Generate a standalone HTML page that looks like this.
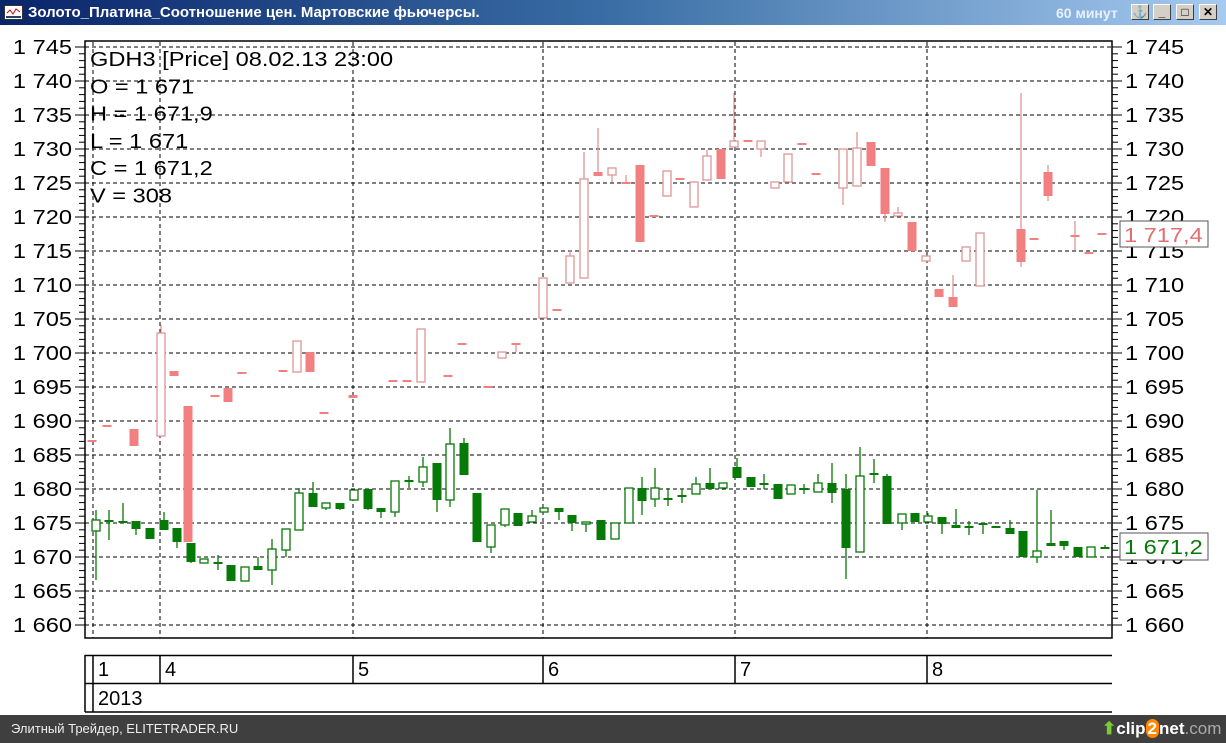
<!DOCTYPE html>
<html><head><meta charset="utf-8"><style>
body{margin:0;width:1226px;height:743px;overflow:hidden;background:#fff;font-family:"Liberation Sans",sans-serif}
#title{position:absolute;left:0;top:0;width:1226px;height:25px;background:linear-gradient(90deg,#0a246a,#3a6ea5 50%,#a6caf0)}
#title .t{position:absolute;left:28px;top:4px;color:#fff;font:bold 15px "Liberation Sans","DejaVu Sans",sans-serif}
#title .m{position:absolute;left:1056px;top:5px;color:#e8f0ff;font:bold 14px "Liberation Sans","DejaVu Sans",sans-serif}
.b{position:absolute;top:4px;width:18px;height:16px;background:#d4d0c8;border:1px solid;border-color:#fff #404040 #404040 #fff;box-sizing:border-box;font:bold 12px "Liberation Sans",sans-serif;text-align:center;line-height:14px}
#foot{position:absolute;left:0;top:715px;width:1226px;height:28px;background:#3f3f3f;color:#eee;font-size:13px}
</style></head><body>
<div id="title"><svg width="20" height="16" style="position:absolute;left:4px;top:5px"><rect x="0.5" y="0.5" width="18" height="14" fill="#fff" stroke="#333"/><polyline points="3,8 6,5 9,9 12,4 16,7" fill="none" stroke="#c00"/><rect x="2" y="11" width="15" height="2" fill="#246"/></svg><span class="t">Золото_Платина_Соотношение цен. Мартовские фьючерсы.</span><span class="m">60 минут</span>
<div class="b" style="left:1131px">⚓</div><div class="b" style="left:1153px">_</div><div class="b" style="left:1176px">□</div><div class="b" style="left:1199px">✕</div></div>
<svg id="c" width="1226" height="715" style="position:absolute;left:0;top:0" font-family="Liberation Sans, sans-serif"></svg>
<div id="foot"><span style="position:absolute;left:11px;top:6px">Элитный Трейдер, ELITETRADER.RU</span>
<span style="position:absolute;left:1102px;top:4px;font:bold 17px 'Liberation Sans',sans-serif;color:#fff"><span style="color:#7c3">⬆</span>clip<span style="background:#f80;border-radius:9px;padding:0 2px">2</span>net<span style="color:#aaa;font-weight:normal">.com</span></span></div>
<script>
var s='';function Y(p){return 47+(1745-p)*6.8}
s+='<rect x="85" y="41" width="1027" height="597" fill="none" stroke="#000" stroke-width="1.5"/>';
for(var p=1660;p<=1745;p+=5){var y=Y(p);s+='<line x1="85" x2="1112" y1="'+y+'" y2="'+y+'" stroke="#000" stroke-dasharray="4,3"/>';
s+='<text class="w" x="72" y="'+(y+7)+'" font-size="20" text-anchor="end">1 '+(p-1000)+'</text><text class="w" x="1125" y="'+(y+7)+'" font-size="20">1 '+(p-1000)+'</text>';
s+='<line x1="75" x2="85" y1="'+y+'" y2="'+y+'" stroke="#000"/><line x1="1112" x2="1122" y1="'+y+'" y2="'+y+'" stroke="#000"/>';}
for(var p=1660;p<=1745;p++){if(p%5){var y=Y(p);s+='<line x1="79" x2="85" y1="'+y+'" y2="'+y+'" stroke="#000"/><line x1="1112" x2="1118" y1="'+y+'" y2="'+y+'" stroke="#000"/>';}}
[93,160,353,543,735,927].forEach(function(x){s+='<line x1="'+x+'" x2="'+x+'" y1="42" y2="638" stroke="#000" stroke-dasharray="4,3"/>'});
var G=[[96,520,531,510,580,0],[109,520,522,510,540,1],[123,521,523,503,523,1],[136,521,529,521,535,1],[150,528,539,528,539,1],[164,520,530,512,530,1],[177,528,542,528,548,1],[191,543,562,543,563,1],[204,559,563,559,563,0],[218,562,564,555,570,1],[231,565,581,565,581,1],[245,567,581,567,581,0],[258,566,570,557,570,1],[272,549,570,539,585,0],[286,529,550,529,557,0],[299,493,530,488,530,0],[313,493,507,482,507,1],[326,503,508,503,510,0],[340,503,509,503,510,1],[354,490,500,490,500,0],[368,489,509,489,510,1],[381,508,512,508,518,1],[395,481,512,481,517,0],[409,480,482,476,488,1],[423,467,482,457,487,0],[437,463,500,463,512,1],[450,444,500,428,507,0],[464,443,475,438,475,1],[477,493,542,493,542,1],[491,525,547,525,553,0],[505,509,525,509,527,0],[518,513,526,513,526,1],[532,516,522,510,522,0],
[544,508,512,508,512,0],[559,508,512,508,520,1],[572,515,523,515,531,1],[586,522,524,522,532,0],[601,520,540,520,540,1],[615,523,539,523,539,0],[629,488,523,488,523,0],[642,488,501,477,515,1],[655,488,499,468,507,0],[668,498,500,488,506,1],[682,495,497,489,503,1],[696,484,494,477,494,0],[710,483,489,468,489,1],[723,483,488,483,490,0],[737,467,478,458,478,1],[751,477,487,477,487,1],[764,483,485,474,489,1],[778,484,499,484,499,1],[791,485,494,485,494,0],[804,488,490,484,494,1],[818,483,492,474,492,0],[832,483,493,463,503,1],[846,489,548,474,579,1],[860,476,552,447,552,0],[874,473,475,459,483,1],[887,476,524,474,524,1],[902,514,523,514,530,0],[915,513,522,513,522,1],[928,516,522,513,522,0],[942,517,524,517,534,1],[956,525,528,509,528,1],[969,526,528,521,535,1],[983,523,525,523,534,1],[996,526,528,526,528,1],[1010,528,534,520,534,1],[1023,531,557,531,557,1],[1037,551,557,490,563,0],[1051,543,546,510,546,1],[1064,541,546,541,550,1],[1078,547,557,547,557,1],[1091,547,557,547,557,0],[1105,547,549,545,549,1]];
var P=[[92,440,442,440,442,1],[107,425,427,425,427,1],[134,429,446,429,446,1],[161,333,436,325,436,0],[174,371,376,371,376,1],[188,406,542,406,542,1],[215,395,397,395,397,1],[228,388,402,388,402,1],[242,372,374,372,374,1],[283,370,372,370,372,1],[297,341,372,341,372,0],[310,352,372,352,372,1],[324,412,414,412,414,1],[353,395,398,395,398,1],[393,380,382,380,382,1],[407,380,382,380,382,1],[421,329,382,329,382,0],[448,375,377,375,377,1],[462,343,345,343,345,1],[488,386,388,386,388,1],[502,352,358,352,358,0],[516,343,345,343,352,1],
[543,278,318,278,318,0],[557,309,311,309,311,1],[570,256,283,250,283,0],[584,179,278,152,278,0],[598,172,176,128,176,1],[612,168,175,168,182,0],[626,182,184,175,184,1],[640,165,242,165,242,1],[654,215,217,215,217,1],[667,171,196,171,196,0],[680,178,180,178,180,1],[694,182,207,182,207,0],[707,156,180,150,180,0],[721,149,179,149,179,1],[734,141,147,93,147,0],[748,140,142,140,142,1],[761,141,149,141,157,0],[775,182,188,182,188,0],[788,154,182,154,182,0],[802,143,145,143,145,1],[816,173,175,173,175,1],[843,149,188,149,205,0],[857,148,186,132,186,0],[871,142,166,142,166,1],[885,168,214,168,222,1],[898,213,216,207,216,0],[912,222,251,222,251,1],[926,256,261,256,261,0],[939,289,297,289,297,1],[953,297,307,275,307,1],[966,247,261,247,261,0],[980,233,286,233,286,0],[1021,229,262,93,267,1],[1034,238,240,238,240,1],[1048,172,196,165,201,1],[1075,235,237,221,250,1],[1089,252,254,252,254,1],[1102,233,235,233,235,1]];
function dr(a,f,st){a.forEach(function(c){var x=c[0],w=9;s+='<line x1="'+x+'" x2="'+x+'" y1="'+c[3]+'" y2="'+c[4]+'" stroke="'+st+'" stroke-width="1.3"/>';
var h=Math.max(c[2]-c[1],1.5);if(c[5])s+='<rect x="'+(x-w/2)+'" y="'+c[1]+'" width="'+w+'" height="'+h+'" fill="'+f+'"/>';else s+='<rect x="'+(x-w/2+0.5)+'" y="'+c[1]+'" width="'+(w-1)+'" height="'+h+'" fill="#fff" stroke="'+st+'" stroke-width="1.3"/>';});}
dr(P,'#f38080','#e09595');dr(G,'#067a06','#067a06');
['GDH3 [Price] 08.02.13 23:00','O = 1 671','H = 1 671,9','L = 1 671','C = 1 671,2','V = 308'].forEach(function(t,i){s+='<text class="w" x="90" y="'+(66+i*27.3)+'" font-size="20">'+t+'</text>'});
s+='<rect x="1120" y="221" width="88" height="26" fill="#fff" stroke="#555"/><text class="w" x="1124" y="242" font-size="20" fill="#e07070">1 717,4</text>';
s+='<rect x="1120" y="533" width="88" height="27" fill="#fff" stroke="#555"/><text class="w" x="1124" y="554" font-size="20" fill="#067a06">1 671,2</text>';
s+='<line x1="85" x2="1112" y1="655.5" y2="655.5" stroke="#000" stroke-width="1.5"/><line x1="85" x2="1112" y1="683.5" y2="683.5" stroke="#000" stroke-width="1.5"/><line x1="85" x2="1112" y1="712" y2="712" stroke="#000" stroke-width="1.5"/>';
s+='<line x1="85" x2="85" y1="655" y2="712" stroke="#000" stroke-width="1.5"/><line x1="93" x2="93" y1="655" y2="712" stroke="#000" stroke-width="1.5"/>';
[[160,'4'],[353,'5'],[543,'6'],[735,'7'],[927,'8']].forEach(function(d){s+='<line x1="'+d[0]+'" x2="'+d[0]+'" y1="655" y2="683" stroke="#000" stroke-width="1.5"/><text x="'+(d[0]+5)+'" y="676" font-size="20">'+d[1]+'</text>'});
s+='<text x="98" y="676" font-size="20">1</text><text x="98" y="705" font-size="20">2013</text>';
document.getElementById('c').innerHTML=s;
var ts=document.querySelectorAll('text.w');for(var i=0;i<ts.length;i++){var L=ts[i].getComputedTextLength();ts[i].setAttribute('textLength',(L*1.18).toFixed(1));ts[i].setAttribute('lengthAdjust','spacingAndGlyphs');}
</script>
</body></html>
